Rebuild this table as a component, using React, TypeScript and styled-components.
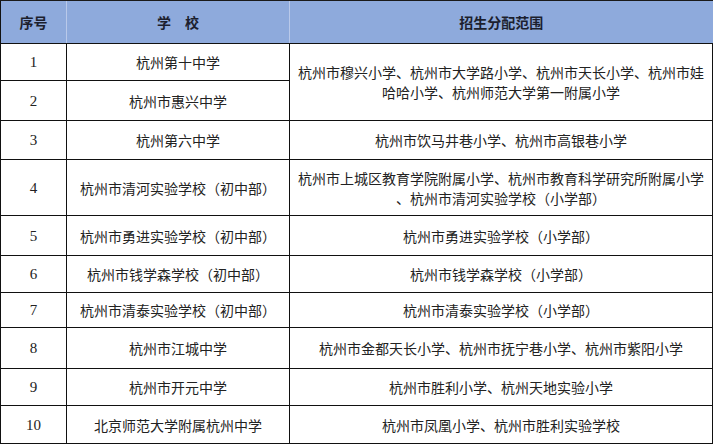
import React from "react";
import styled, { createGlobalStyle } from "styled-components";

interface Row {
  no: string;
  school: string;
  range?: string[];
  rangeSpan?: number;
  height: number;
}

const rows: Row[] = [
  {
    no: "1",
    school: "杭州第十中学",
    range: ["杭州市穆兴小学、杭州市大学路小学、杭州市天长小学、杭州市娃", "哈哈小学、杭州师范大学第一附属小学"],
    rangeSpan: 2,
    height: 37,
  },
  { no: "2", school: "杭州市惠兴中学", height: 40 },
  { no: "3", school: "杭州第六中学", range: ["杭州市饮马井巷小学、杭州市高银巷小学"], height: 39 },
  {
    no: "4",
    school: "杭州市清河实验学校（初中部）",
    range: ["杭州市上城区教育学院附属小学、杭州市教育科学研究所附属小学", "、杭州市清河实验学校（小学部）"],
    height: 56,
  },
  { no: "5", school: "杭州市勇进实验学校（初中部）", range: ["杭州市勇进实验学校（小学部）"], height: 40 },
  { no: "6", school: "杭州市钱学森学校（初中部）", range: ["杭州市钱学森学校（小学部）"], height: 37 },
  { no: "7", school: "杭州市清泰实验学校（初中部）", range: ["杭州市清泰实验学校（小学部）"], height: 35 },
  { no: "8", school: "杭州市江城中学", range: ["杭州市金都天长小学、杭州市抚宁巷小学、杭州市紫阳小学"], height: 41 },
  { no: "9", school: "杭州市开元中学", range: ["杭州市胜利小学、杭州天地实验小学"], height: 37 },
  { no: "10", school: "北京师范大学附属杭州中学", range: ["杭州市凤凰小学、杭州市胜利实验学校"], height: 38 },
];

const GlobalStyle = createGlobalStyle`
  body {
    margin: 0;
    background: #ffffff;
    font-family: "Liberation Serif", "Noto Sans CJK SC", serif;
  }
`;

const Table = styled.table`
  width: 712px;
  table-layout: fixed;
  border-collapse: collapse;
  color: #222222;
  font-size: 14px;
`;

const HeadRow = styled.tr`
  height: 43px;
  background: #8eaadc;
`;

const HeadCell = styled.th`
  padding: 0;
  font-family: "Noto Sans CJK SC", sans-serif;
  font-size: 14px;
  font-weight: 700;
  color: #1c1f2e;
  text-align: center;
  vertical-align: middle;
  border-top: 1px solid #1a1a1a;
  border-bottom: 1px solid #111111;
  border-left: 1px solid #b9c9ea;
  &:first-child {
    border-left: 1px solid #111111;
  }
`;

const BodyRow = styled.tr<{ $h: number }>`
  height: ${(p) => p.$h}px;
`;

const Cell = styled.td<{ $num?: boolean }>`
  padding: 0 6px;
  border: 1px solid #111111;
  text-align: center;
  vertical-align: middle;
  line-height: 20px;
  font-family: ${(p) => (p.$num ? `"Liberation Serif", serif` : `"Noto Sans CJK SC", sans-serif`)};
  font-size: ${(p) => (p.$num ? "15px" : "14px")};
  font-weight: 400;
  white-space: nowrap;
`;

export default function App() {
  return (
    <>
      <GlobalStyle />
      <Table>
        <colgroup>
          <col style={{ width: 66 }} />
          <col style={{ width: 223 }} />
          <col style={{ width: 423 }} />
        </colgroup>
        <thead>
          <HeadRow>
            <HeadCell>序号</HeadCell>
            <HeadCell>学　校</HeadCell>
            <HeadCell>招生分配范围</HeadCell>
          </HeadRow>
        </thead>
        <tbody>
          {rows.map((r) => (
            <BodyRow key={r.no} $h={r.height}>
              <Cell $num>{r.no}</Cell>
              <Cell>{r.school}</Cell>
              {r.range && (
                <Cell rowSpan={r.rangeSpan}>
                  {r.range.map((line, i) => (
                    <React.Fragment key={i}>
                      {i > 0 && <br />}
                      {line}
                    </React.Fragment>
                  ))}
                </Cell>
              )}
            </BodyRow>
          ))}
        </tbody>
      </Table>
    </>
  );
}
